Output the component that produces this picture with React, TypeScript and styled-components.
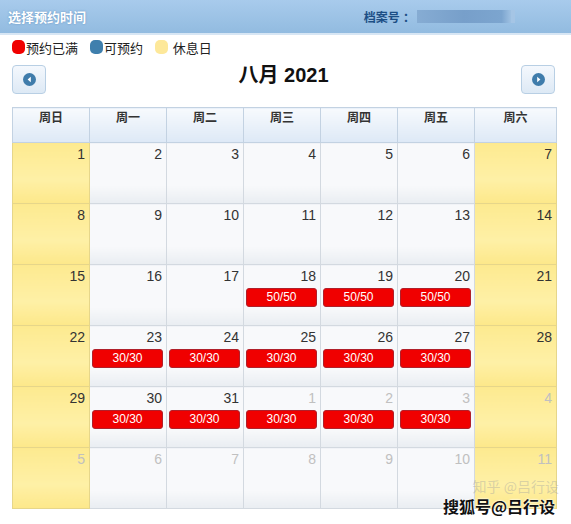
import React from "react";
import styled, { createGlobalStyle } from "styled-components";

const Global = createGlobalStyle`
  html, body {
    margin: 0;
    padding: 0;
    background: #fff;
    font-family: "Liberation Sans", Arial, "Noto Sans CJK SC", sans-serif;
  }
`;

const Page = styled.div`
  position: relative;
  width: 571px;
  height: 524px;
  overflow: hidden;
  background: #fff;
`;

const TopBar = styled.div`
  height: 33px;
  display: flex;
  align-items: center;
  justify-content: space-between;
  padding: 0 8px;
  background: linear-gradient(#a8cbec, #92bbe0);
  border-bottom: 2px solid #d7e6f4;
`;

const Title = styled.div`
  color: #fff;
  font-size: 13px;
  font-weight: bold;
  text-shadow: 0 0 2px #5f8fbd;
`;

const FileNo = styled.div`
  display: flex;
  align-items: center;
  color: #1d4f85;
  font-size: 12px;
  font-weight: bold;
  margin-right: 48px;
`;

const Blur = styled.div`
  width: 94px;
  height: 13px;
  margin-left: 2px;
  background: linear-gradient(90deg, #86acd3, #779fca 50%, #7ca5cf 90%, #9fc1e2);
  border-right: 4px solid #a5c5e5;
`;

const Legend = styled.div`
  display: flex;
  align-items: center;
  gap: 12px;
  padding: 3px 12px 0;
  height: 18px;
  font-size: 13px;
  color: #222;
`;

const LegendItem = styled.div`
  display: flex;
  align-items: center;
`;

const Swatch = styled.span<{ $c: string }>`
  width: 13px;
  height: 14px;
  border-radius: 5px;
  background: ${(p) => p.$c};
  margin-right: 1px;
`;

const Nav = styled.div`
  display: flex;
  align-items: center;
  justify-content: space-between;
  padding: 0 16px 0 12px;
  height: 36px;
  margin-top: 5px;
`;

const NavBtn = styled.div`
  width: 32px;
  height: 27px;
  border: 1px solid #b8cfe4;
  border-radius: 4px;
  background: linear-gradient(#f4f8fd, #dde9f5);
  display: flex;
  align-items: center;
  justify-content: center;
`;

const Month = styled.div`
  font-size: 20px;
  font-weight: bold;
  color: #111;
  margin-top: -12px;
`;

const Table = styled.table`
  border-collapse: collapse;
  table-layout: fixed;
  width: 544px;
  margin: 10px 0 0 12px;
`;

const Th = styled.th`
  height: 32px;
  padding: 2px 0 0;
  vertical-align: top;
  font-size: 12px;
  font-weight: bold;
  color: #333;
  border: 1px solid #c3d2e2;
  background: linear-gradient(#f7fafd, #dde9f6);
  line-height: 16px;
`;

const Td = styled.td<{ $weekend: boolean }>`
  height: 60px;
  padding: 0;
  vertical-align: top;
  border: 1px solid ${(p) => (p.$weekend ? "#e6d68a" : "#d3d9e0")};
  background: ${(p) =>
    p.$weekend
      ? "linear-gradient(#fdea90, #fef0a6 60%, #fde88a)"
      : "linear-gradient(#f8f9fb, #f8f9fb 70%, #e9edf2)"};
`;

const DayNum = styled.div<{ $other: boolean }>`
  text-align: right;
  padding: 3px 4px 0 0;
  font-size: 14px;
  line-height: 17px;
  color: ${(p) => (p.$other ? "#c0c0c0" : "#333")};
`;

const Badge = styled.div`
  margin: 3px 3px 0 2px;
  height: 17px;
  border: 1px solid #b0202a;
  border-radius: 3px;
  background: #f00000;
  color: #fff;
  font-size: 12px;
  line-height: 17px;
  text-align: center;
`;

const Mark = styled.div`
  position: absolute;
  right: 16px;
  bottom: 6px;
  font-family: "Noto Sans CJK SC", sans-serif;
  font-weight: bold;
  font-size: 16px;
  color: #111;
  text-shadow: 0 0 2px #fff, 0 0 2px #fff;
`;

const Ghost = styled.div`
  position: absolute;
  right: 12px;
  bottom: 28px;
  font-family: "Noto Sans CJK SC", sans-serif;
  font-size: 14px;
  color: rgba(160, 160, 160, 0.4);
`;

const Arrow = ({ dir }: { dir: "l" | "r" }) => (
  <svg width="13" height="13" viewBox="0 0 13 13">
    <circle cx="6.5" cy="6.5" r="6.5" fill="#3f7cab" />
    {dir === "l" ? (
      <polygon points="7.8,3.8 7.8,9.2 4.6,6.5" fill="#fff" />
    ) : (
      <polygon points="5.2,3.8 5.2,9.2 8.4,6.5" fill="#fff" />
    )}
  </svg>
);

type Cell = { d: number; other?: boolean; badge?: string };

const weeks: Cell[][] = [
  [1, 2, 3, 4, 5, 6, 7].map((d) => ({ d })),
  [8, 9, 10, 11, 12, 13, 14].map((d) => ({ d })),
  [
    { d: 15 },
    { d: 16 },
    { d: 17 },
    { d: 18, badge: "50/50" },
    { d: 19, badge: "50/50" },
    { d: 20, badge: "50/50" },
    { d: 21 },
  ],
  [
    { d: 22 },
    { d: 23, badge: "30/30" },
    { d: 24, badge: "30/30" },
    { d: 25, badge: "30/30" },
    { d: 26, badge: "30/30" },
    { d: 27, badge: "30/30" },
    { d: 28 },
  ],
  [
    { d: 29 },
    { d: 30, badge: "30/30" },
    { d: 31, badge: "30/30" },
    { d: 1, other: true, badge: "30/30" },
    { d: 2, other: true, badge: "30/30" },
    { d: 3, other: true, badge: "30/30" },
    { d: 4, other: true },
  ],
  [5, 6, 7, 8, 9, 10, 11].map((d) => ({ d, other: true })),
];

const heads = ["周日", "周一", "周二", "周三", "周四", "周五", "周六"];
const colWidths = [77, 77, 77, 77, 77, 77, 82];

export default function App() {
  return (
    <Page>
      <Global />
      <TopBar>
        <Title>选择预约时间</Title>
        <FileNo>
          档案号 ：<Blur />
        </FileNo>
      </TopBar>
      <Legend>
        <LegendItem>
          <Swatch $c="#f00000" />
          预约已满
        </LegendItem>
        <LegendItem>
          <Swatch $c="#3f7fad" />
          可预约
        </LegendItem>
        <LegendItem>
          <Swatch $c="#fde89a" />
          &nbsp;休息日
        </LegendItem>
      </Legend>
      <Nav>
        <NavBtn>
          <Arrow dir="l" />
        </NavBtn>
        <Month>八月 2021</Month>
        <NavBtn>
          <Arrow dir="r" />
        </NavBtn>
      </Nav>
      <Table>
        <colgroup>
          {colWidths.map((w, i) => (
            <col key={i} style={{ width: w }} />
          ))}
        </colgroup>
        <thead>
          <tr>
            {heads.map((h) => (
              <Th key={h}>{h}</Th>
            ))}
          </tr>
        </thead>
        <tbody>
          {weeks.map((w, i) => (
            <tr key={i}>
              {w.map((c, j) => (
                <Td key={j} $weekend={j === 0 || j === 6}>
                  <DayNum $other={!!c.other}>{c.d}</DayNum>
                  {c.badge && <Badge>{c.badge}</Badge>}
                </Td>
              ))}
            </tr>
          ))}
        </tbody>
      </Table>
      <Ghost>知乎 @吕行设</Ghost>
      <Mark>搜狐号@吕行设</Mark>
    </Page>
  );
}
